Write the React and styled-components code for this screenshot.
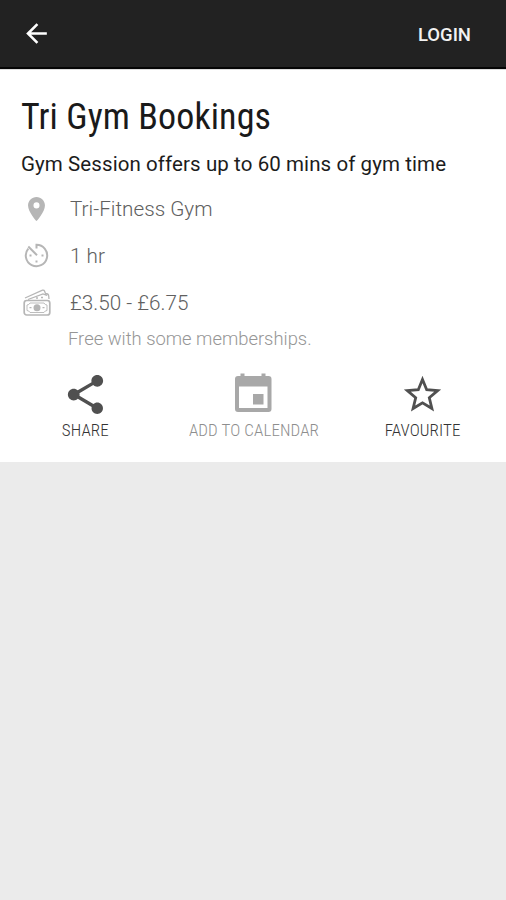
import React from 'react';
import styled, { createGlobalStyle } from 'styled-components';
import { MdArrowBack, MdPlace, MdShare } from 'react-icons/md';

const GlobalStyle = createGlobalStyle`
  body {
    margin: 0;
    background: #ebebeb;
    font-family: Roboto, "Liberation Sans", sans-serif;
  }
`;

const Page = styled.div`
  min-height: 900px;
  background: #ebebeb;
`;

const TopBar = styled.header`
  display: flex;
  align-items: center;
  justify-content: space-between;
  box-sizing: border-box;
  height: 69px;
  padding: 0 35px 0 21px;
  background: #222;
  border-bottom: 2px solid #050505;
  color: #fff;
`;

const IconButton = styled.button`
  display: flex;
  padding: 0;
  border: 0;
  background: none;
  color: inherit;
`;

const LoginButton = styled(IconButton)`
  padding-top: 3px;
  font: 500 18.5px/24px Roboto, sans-serif;
  font-stretch: 90%;
  color: #f2f2f2;
`;

const Card = styled.main`
  box-sizing: border-box;
  height: 393px;
  padding: 26px 22px 0;
  background: #fff;
  border-top: 1px solid #ddd;
`;

const Title = styled.h1`
  margin: -1px 0 0 -1px;
  font-size: 36px;
  font-weight: 400;
  font-stretch: 75%;
  line-height: 44px;
  letter-spacing: 0.1px;
  color: #1a1a1a;
  white-space: nowrap;
`;

const Summary = styled.p`
  margin: 12px 0 8px -1px;
  font-size: 20.5px;
  font-weight: 400;
  line-height: 26px;
  letter-spacing: 0.09px;
  color: #1c1c1c;
  white-space: nowrap;
`;

const InfoRow = styled.div`
  display: flex;
  align-items: center;
  height: 47px;
  font-size: 20.7px;
  font-weight: 300;
  color: #606060;
`;

const InfoIcon = styled.div`
  display: flex;
  justify-content: center;
  width: 29px;
  margin-right: 19px;
  color: #b6b6b6;
`;

const Note = styled.p`
  margin: 0 0 0 46px;
  font-size: 18.4px;
  font-weight: 300;
  line-height: 26px;
  color: #969696;
  white-space: nowrap;
`;

const Actions = styled.div`
  display: grid;
  grid-template-columns: repeat(3, 1fr);
  margin: 19px -23px 0 -21px;
`;

const Action = styled.button`
  display: flex;
  flex-direction: column;
  align-items: center;
  gap: 1px;
  padding: 0;
  border: 0;
  background: none;
  color: ${({ $disabled }) => ($disabled ? '#a8a8a8' : '#505050')};
`;

const ActionLabel = styled.span`
  font: 300 17px/22px Roboto, sans-serif;
  font-stretch: 75%;
  letter-spacing: 0.1px;
  color: ${({ $disabled }) => ($disabled ? '#8e8e8e' : '#333')};
  white-space: nowrap;
`;

const TimerIcon = () => (
  <svg width="29" height="29" viewBox="0 0 29 29" fill="none" stroke="currentColor" strokeWidth="2">
    <path d="M14.500 7.500V3.800A10.700 10.700 0 1 1 6.300 7.600M6.300 5.500 15 14.200" />
    <path d="M7.500 14.500h2M19.500 14.500h2M13.500 20.500h2" />
  </svg>
);

const CashIcon = () => (
  <svg width="28" height="28" viewBox="0 0 28 28" fill="none" stroke="currentColor" strokeWidth="1.3">
    <path d="M2 9 19.500 1.200Q21 0.800 21.500 2L22.500 4.500Q25.500 4.500 25.700 7L26 10M5 10.500 20 5 24 6.500" />
    <rect x="1.200" y="11.500" width="25.600" height="14.500" rx="2.500" strokeWidth="1.700" />
    <path d="M4 16Q6 16 7 14H21Q22 16 24 16V21.500Q22 21.500 21 23.500H7Q6 21.500 4 21.500Z" strokeWidth="0.900" />
    <circle cx="14" cy="18.700" r="3.500" fill="currentColor" stroke="none" />
    <path d="M6.500 18.700h2M19.500 18.700h2M13 9h2M18 8.500h2" />
  </svg>
);

const CalendarIcon = () => (
  <svg width="47" height="47" viewBox="0 0 47 47" fill="currentColor">
    <path
      fillRule="evenodd"
      d="M10.500 2.500h4V5h17V2.500h4V5h3q3 0 3 3v30q0 3-3 3H8q-3 0-3-3V8q0-3 3-3h2.500ZM9 15.500v21.500H37.500V15.500Z"
    />
    <rect x="23" y="23" width="10.500" height="10.500" />
  </svg>
);

const StarIcon = () => (
  <svg width="47" height="47" viewBox="0 0 47 47" fill="none" stroke="currentColor" strokeWidth="2.8">
    <path d="M23.500 8.500 27.700 18.700 38.700 19.600 30.300 26.800 32.900 37.500 23.500 31.800 14.100 37.500 16.700 26.800 8.300 19.600 19.300 18.700Z" />
  </svg>
);

const details = [
  { icon: <MdPlace size={32} />, text: 'Tri-Fitness Gym' },
  { icon: <TimerIcon />, text: '1 hr' },
  { icon: <CashIcon />, text: '£3.50 - £6.75' },
];

const actions = [
  { icon: <MdShare size={47} />, text: 'SHARE' },
  { icon: <CalendarIcon />, text: 'ADD TO CALENDAR', disabled: true },
  { icon: <StarIcon />, text: 'FAVOURITE' },
];

const App = () => (
  <>
    <GlobalStyle />
    <Page>
      <TopBar>
        <IconButton aria-label="Back">
          <MdArrowBack size={31} />
        </IconButton>
        <LoginButton>LOGIN</LoginButton>
      </TopBar>
      <Card>
        <Title>Tri Gym Bookings</Title>
        <Summary>Gym Session offers up to 60 mins of gym time</Summary>
        {details.map(({ icon, text }) => (
          <InfoRow key={text}>
            <InfoIcon>{icon}</InfoIcon>
            {text}
          </InfoRow>
        ))}
        <Note>Free with some memberships.</Note>
        <Actions>
          {actions.map(({ icon, text, disabled }) => (
            <Action key={text} $disabled={disabled}>
              {icon}
              <ActionLabel $disabled={disabled}>{text}</ActionLabel>
            </Action>
          ))}
        </Actions>
      </Card>
    </Page>
  </>
);

export default App;
